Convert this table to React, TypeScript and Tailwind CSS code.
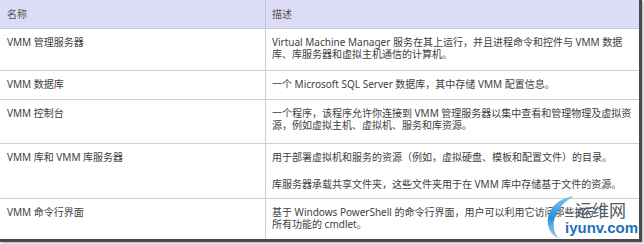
const rows = [
  {
    name: "VMM 管理服务器",
    h: "h-[42px]",
    desc: [
      [
        "Virtual Machine Manager 服务在其上运行，并且进程命令和控件与 VMM 数据",
        "库、库服务器和虚拟主机通信的计算机。",
      ],
    ],
  },
  {
    name: "VMM 数据库",
    h: "h-[29px]",
    desc: [["一个 Microsoft SQL Server 数据库，其中存储 VMM 配置信息。"]],
  },
  {
    name: "VMM 控制台",
    h: "h-[44px]",
    desc: [
      [
        "一个程序，该程序允许你连接到 VMM 管理服务器以集中查看和管理物理及虚拟资",
        "源，例如虚拟主机、虚拟机、服务和库资源。",
      ],
    ],
  },
  {
    name: "VMM 库和 VMM 库服务器",
    h: "h-[55px]",
    desc: [
      ["用于部署虚拟机和服务的资源（例如，虚拟硬盘、模板和配置文件）的目录。"],
      ["库服务器承载共享文件夹，这些文件夹用于在 VMM 库中存储基于文件的资源。"],
    ],
  },
  {
    name: "VMM 命令行界面",
    h: "h-[40px]",
    desc: [
      [
        "基于 Windows PowerShell 的命令行界面，用户可以利用它访问那些执行",
        "所有功能的 cmdlet。",
      ],
    ],
  },
];

const Watermark = () => (
  <div className="absolute left-[544px] top-[192px] w-[100px] h-[50px]">
    <svg width="40" height="50" viewBox="0 0 40 50" className="absolute left-0 top-0">
      <defs>
        <linearGradient id="wm" x1="0" y1="0" x2="0" y2="1">
          <stop offset="0" stopColor="#7cc8f0" />
          <stop offset="0.5" stopColor="#2b8fd8" />
          <stop offset="1" stopColor="#9fd4f2" />
        </linearGradient>
      </defs>
      <path
        d="M30 4 C14 6 2 18 4 32 C5 40 10 45 16 47 C10 42 8 34 11 25 C14 16 21 9 30 4 Z"
        fill="url(#wm)"
      />
    </svg>
    <div className="absolute left-[31px] top-[9px] text-[17px] leading-[17px] text-[#505c6a] font-['Noto_Sans_CJK_SC',sans-serif]">
      运维网
    </div>
    <div className="absolute left-[21px] top-[28px] text-[15px] leading-[16px] font-bold text-[#1f6fb8] font-['Liberation_Sans',Arial,sans-serif]">
      iyunv.com
    </div>
  </div>
);

export default function App() {
  return (
    <div className="relative w-[644px] h-[244px] bg-white font-['Noto_Sans','Noto_Sans_CJK_SC',sans-serif] text-[10px] leading-[12px] text-[#3e3e3e]">
      <div className="w-[642px] border-r-[3px] border-b-[3px] border-[#4a4a4a] shadow-[1px_1px_2px_rgba(0,0,0,0.35)]">
        {/* header */}
        <div className="flex h-[29px] bg-[#dcdcf6] border-b border-[#c9c9d6] text-[#555]">
          <div className="w-[266px] border-r border-[#c4c4cc] pl-[7px] pt-[8px]">名称</div>
          <div className="flex-1 pl-[6px] pt-[8px]">描述</div>
        </div>
        {rows.map((r, i) => (
          <div
            key={r.name}
            className={`flex ${r.h} ${i < rows.length - 1 ? "border-b" : ""} border-[#cfcfcf]`}
          >
            <div className="w-[266px] border-r border-[#cfcfcf] pl-[7px] pt-[7px] whitespace-nowrap">
              {r.name}
            </div>
            <div className="flex-1 pl-[6px] pt-[7px] flex flex-col gap-[15px] whitespace-nowrap">
              {r.desc.map((p, j) => (
                <div key={j}>
                  {p.map((line, k) => (
                    <div key={k}>{line}</div>
                  ))}
                </div>
              ))}
            </div>
          </div>
        ))}
      </div>
      <Watermark />
    </div>
  );
}
